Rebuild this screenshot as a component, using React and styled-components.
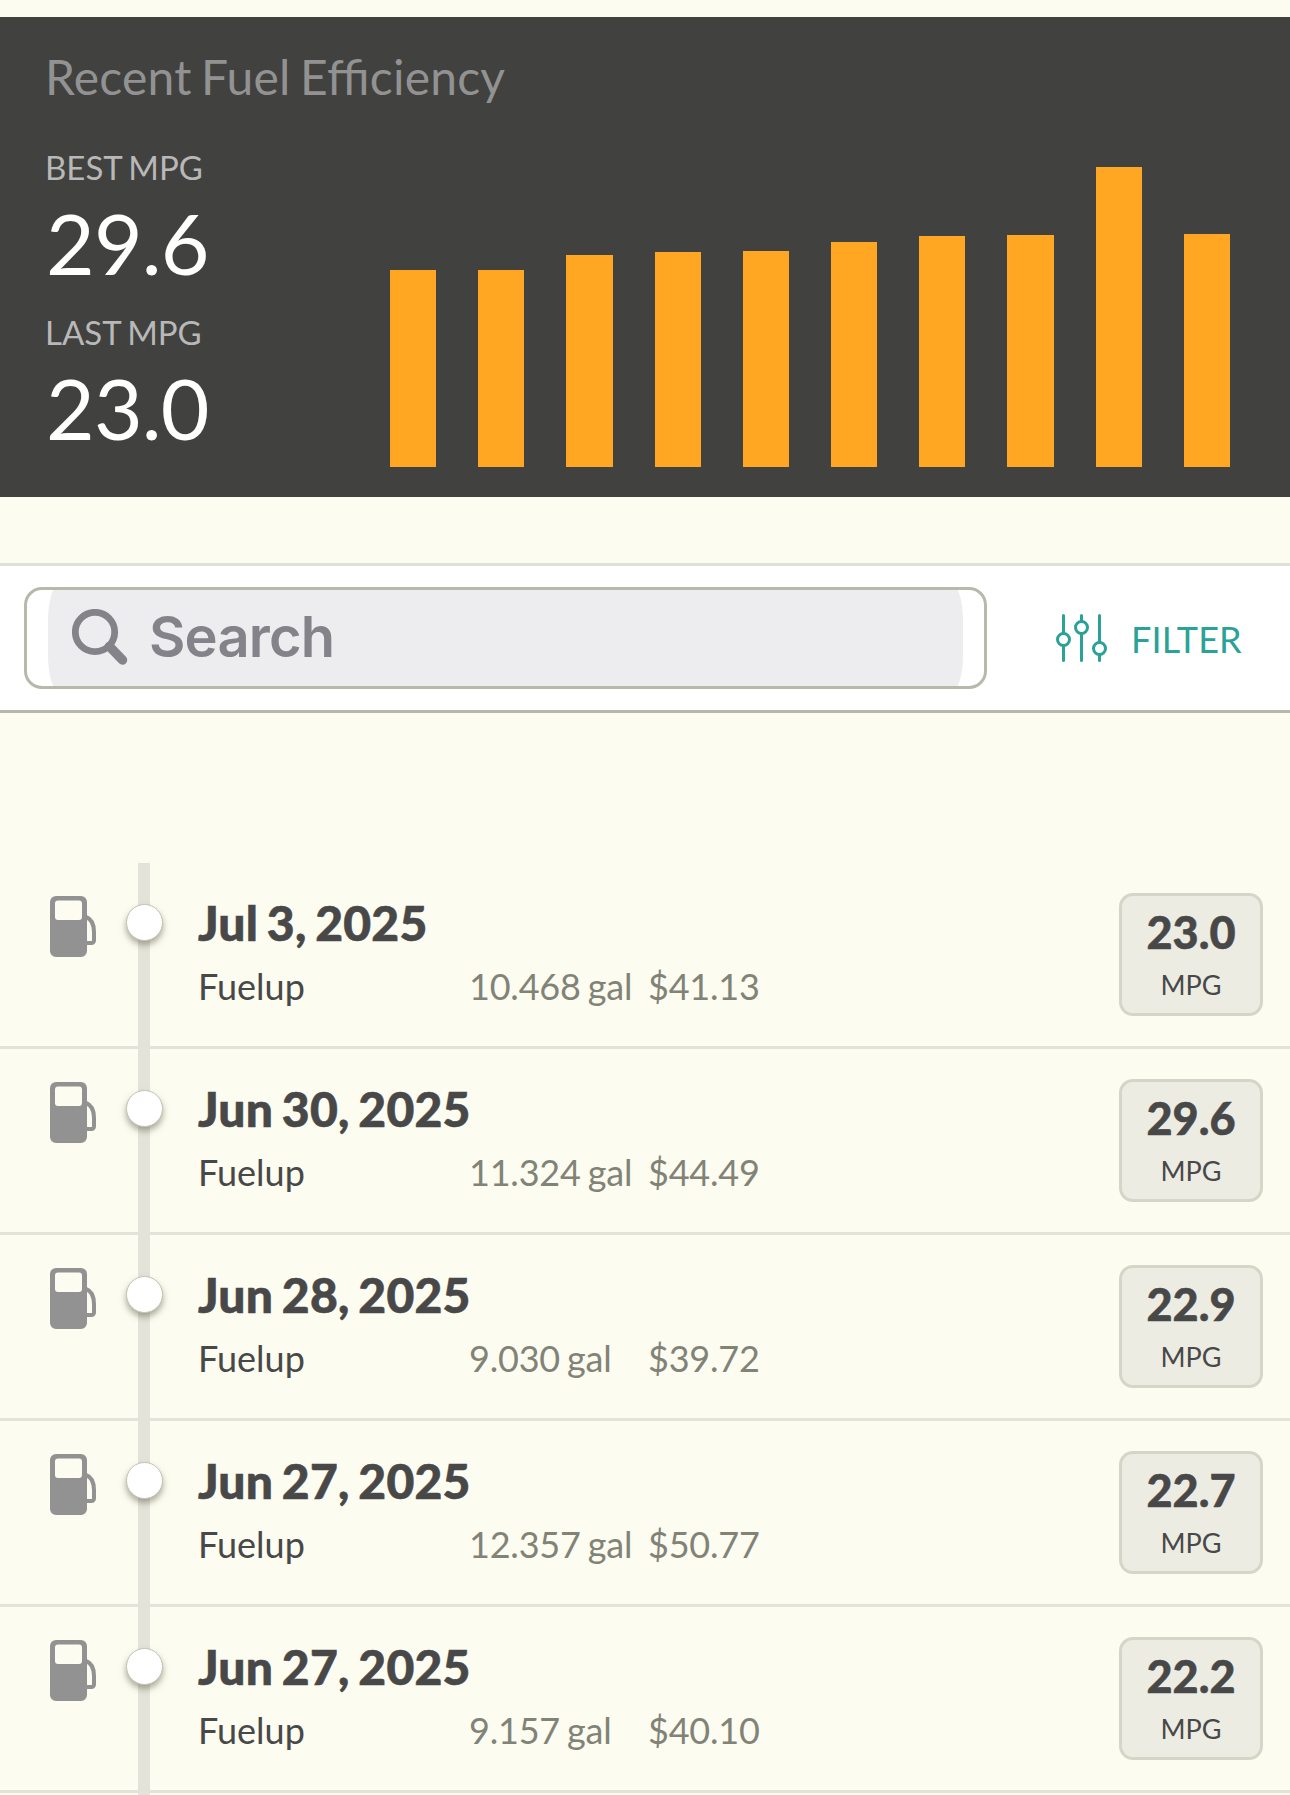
import React from 'react';
import styled, { createGlobalStyle } from 'styled-components';

const GlobalStyle = createGlobalStyle`
  * {
    box-sizing: border-box;
  }

  body {
    margin: 0;
    background: #fcfcf0;
    color: #484848;
    font-family: Lato, 'Liberation Sans', sans-serif;
  }
`;

const Page = styled.main`
  height: 1795px;
  padding-top: 17px;
  overflow: hidden;
`;

const Summary = styled.section`
  height: 480px;
  padding: 31px 59.9px 30px 45px;
  background: #41413f;
`;

const SummaryTitle = styled.h1`
  margin: 0;
  color: #929292;
  font-size: 48px;
  font-weight: 400;
  line-height: 58px;
  letter-spacing: 0.2px;
  word-spacing: -3px;
  font-feature-settings: 'liga';
`;

const SummaryBody = styled.div`
  display: flex;
  justify-content: space-between;
`;

const Stats = styled.div`
  padding-top: 41px;
`;

const Stat = styled.div`
  margin-bottom: 19px;
`;

const StatLabel = styled.div`
  margin-bottom: 6px;
  color: #b8b8b8;
  font-size: 33px;
  line-height: 40px;
  word-spacing: -2px;
  text-transform: uppercase;
`;

const StatValue = styled.div`
  padding-left: 1px;
  color: #fff;
  font-size: 84px;
  line-height: 100px;
  letter-spacing: -0.8px;
`;

const Chart = styled.div`
  display: flex;
  align-items: flex-end;
  justify-content: space-between;
  width: 840.2px;
  height: 361px;
`;

const Bar = styled.div`
  width: 46.2px;
  background: #ffa722;
`;

const Toolbar = styled.div`
  display: flex;
  align-items: center;
  height: 150px;
  margin-top: 66px;
  padding: 0 48px 0 24px;
  border-top: 3px solid #e0e1d6;
  border-bottom: 3px solid #b7b9aa;
  background: #fff;
`;

const SearchBox = styled.div`
  display: flex;
  align-items: center;
  width: 963px;
  height: 102px;
  padding: 0 21px;
  overflow: hidden;
  border: 3px solid #b7b9aa;
  border-radius: 18px;
`;

const SearchField = styled.div`
  display: flex;
  flex: 1;
  flex-shrink: 0;
  align-items: center;
  height: 108px;
  padding: 0 24px 3px;
  border-radius: 12px / 36px;
  background: #ededf0;
  color: #848389;
  font-family: Inter, 'Liberation Sans', sans-serif;
  font-size: 56px;
  font-weight: 600;
  line-height: 68px;
`;

const SearchLabel = styled.span`
  margin-left: 21px;
  letter-spacing: -0.8px;
`;

const FilterButton = styled.button`
  display: flex;
  align-items: center;
  margin-left: 69px;
  padding: 0;
  border: 0;
  background: none;
  color: #2ba297;
  font-family: inherit;
  font-size: 36px;
  line-height: 44px;
`;

const FilterLabel = styled.span`
  padding-top: 2px;
  margin-left: 24px;
  letter-spacing: 0.1px;
`;

const Timeline = styled.div`
  margin-top: 150px;
`;

const Row = styled.article`
  display: flex;
  align-items: flex-start;
  height: 186px;
  padding-right: 27px;
  border-bottom: 3px solid #e3e3d9;
`;

const RowIcon = styled.div`
  width: 126px;
  padding: 33px 0 0 50px;

  svg {
    display: block;
  }
`;

/* runs past the row's border so the line stays unbroken between entries */
const Track = styled.div`
  display: flex;
  justify-content: center;
  width: 36px;
  height: 190px;
  padding-top: 41px;
  background: linear-gradient(#e3e3d9, #e3e3d9) center / 12px 100% no-repeat;
`;

const Dot = styled.div`
  width: 37px;
  height: 37px;
  margin: 0 -1px;
  flex-shrink: 0;
  border: 1px solid #c3c4b6;
  border-radius: 50%;
  background: #fff;
  box-shadow: 0 4px 6px rgba(90, 91, 70, 0.5);
`;

const Details = styled.div`
  flex: 1;
  padding: 31px 0 0 36px;
`;

const EntryDate = styled.h2`
  margin: 0 0 12px;
  font-size: 48px;
  font-weight: 900;
  line-height: 58px;
  letter-spacing: 0.25px;
  word-spacing: -3px;
  -webkit-text-stroke: 0.6px currentColor;
`;

const Facts = styled.div`
  display: grid;
  grid-template-columns: 271px 179px auto;
  font-size: 36px;
  line-height: 44px;
`;

const Fact = styled.span`
  color: #828377;
  letter-spacing: -0.2px;
  word-spacing: -2px;
`;

const Badge = styled.div`
  width: 144px;
  height: 123px;
  margin-top: 30px;
  padding-top: 9px;
  border: 3px solid #d5d6c8;
  border-radius: 14px;
  background: #ecece3;
  text-align: center;
`;

const BadgeValue = styled.div`
  margin-bottom: 10px;
  font-size: 45px;
  font-weight: 900;
  line-height: 54px;
  -webkit-text-stroke: 0.5px currentColor;
`;

const BadgeUnit = styled.div`
  font-size: 27px;
  line-height: 32px;
`;

const BARS = [197, 197, 212, 215, 216, 225, 231, 232, 300, 233];

const ENTRIES = [
  { date: 'Jul 3, 2025', gallons: '10.468', cost: '$41.13', mpg: '23.0' },
  { date: 'Jun 30, 2025', gallons: '11.324', cost: '$44.49', mpg: '29.6' },
  { date: 'Jun 28, 2025', gallons: '9.030', cost: '$39.72', mpg: '22.9' },
  { date: 'Jun 27, 2025', gallons: '12.357', cost: '$50.77', mpg: '22.7' },
  { date: 'Jun 27, 2025', gallons: '9.157', cost: '$40.10', mpg: '22.2' },
];

const SearchIcon = () => (
  <svg width="56" height="56" viewBox="0 0 56 56" fill="none" stroke="currentColor">
    <circle cx="23" cy="23" r="19.7" strokeWidth="6.8" />
    <path d="M37.5 37.5 50.5 51" strokeWidth="9.5" strokeLinecap="round" />
  </svg>
);

const FilterIcon = () => (
  <svg width="51" height="48" viewBox="0 0 51 48" fill="none" stroke="currentColor" strokeWidth="3" strokeLinecap="round">
    <path d="M7.5 1.5v17M7.5 32v14.5M25.5 1.5v5M25.5 20v26.5M43.5 1.5v26M43.5 41v5.5" />
    <circle cx="7.5" cy="25.5" r="6" />
    <circle cx="25.5" cy="13.5" r="6" />
    <circle cx="43.5" cy="34.5" r="6" />
  </svg>
);

const PumpIcon = () => (
  <svg width="46" height="61" viewBox="0 0 46 61" fill="#929292">
    <path
      fillRule="evenodd"
      d="M6 0h25a6 6 0 0 1 6 6v49a6 6 0 0 1-6 6H6a6 6 0 0 1-6-6V6a6 6 0 0 1 6-6Zm2 4.5a3 3 0 0 0-3 3V21a3 3 0 0 0 3 3h21a3 3 0 0 0 3-3V7.5a3 3 0 0 0-3-3H8Z"
    />
    <path d="M36 21c5.5 2 8 8 8 15v8.500a2.500 2.500 0 0 1-2.500 2.500H36" fill="none" stroke="#929292" strokeWidth="4" />
  </svg>
);

const Entry = ({ date, gallons, cost, mpg }) => (
  <Row>
    <RowIcon>
      <PumpIcon />
    </RowIcon>
    <Track>
      <Dot />
    </Track>
    <Details>
      <EntryDate>{date}</EntryDate>
      <Facts>
        <span>Fuelup</span>
        <Fact>{gallons} gal</Fact>
        <Fact>{cost}</Fact>
      </Facts>
    </Details>
    <Badge>
      <BadgeValue>{mpg}</BadgeValue>
      <BadgeUnit>MPG</BadgeUnit>
    </Badge>
  </Row>
);

const App = () => {
  return (
    <Page>
      <GlobalStyle />
      <Summary>
        <SummaryTitle>Recent Fuel Efficiency</SummaryTitle>
        <SummaryBody>
          <Stats>
            <Stat>
              <StatLabel>Best MPG</StatLabel>
              <StatValue>29.6</StatValue>
            </Stat>
            <Stat>
              <StatLabel>Last MPG</StatLabel>
              <StatValue>23.0</StatValue>
            </Stat>
          </Stats>
          <Chart>
            {BARS.map((height, i) => (
              <Bar key={i} style={{ height }} />
            ))}
          </Chart>
        </SummaryBody>
      </Summary>
      <Toolbar>
        <SearchBox>
          <SearchField>
            <SearchIcon />
            <SearchLabel>Search</SearchLabel>
          </SearchField>
        </SearchBox>
        <FilterButton>
          <FilterIcon />
          <FilterLabel>FILTER</FilterLabel>
        </FilterButton>
      </Toolbar>
      <Timeline>
        {ENTRIES.map((entry, i) => (
          <Entry key={i} {...entry} />
        ))}
      </Timeline>
    </Page>
  );
};

export default App;
